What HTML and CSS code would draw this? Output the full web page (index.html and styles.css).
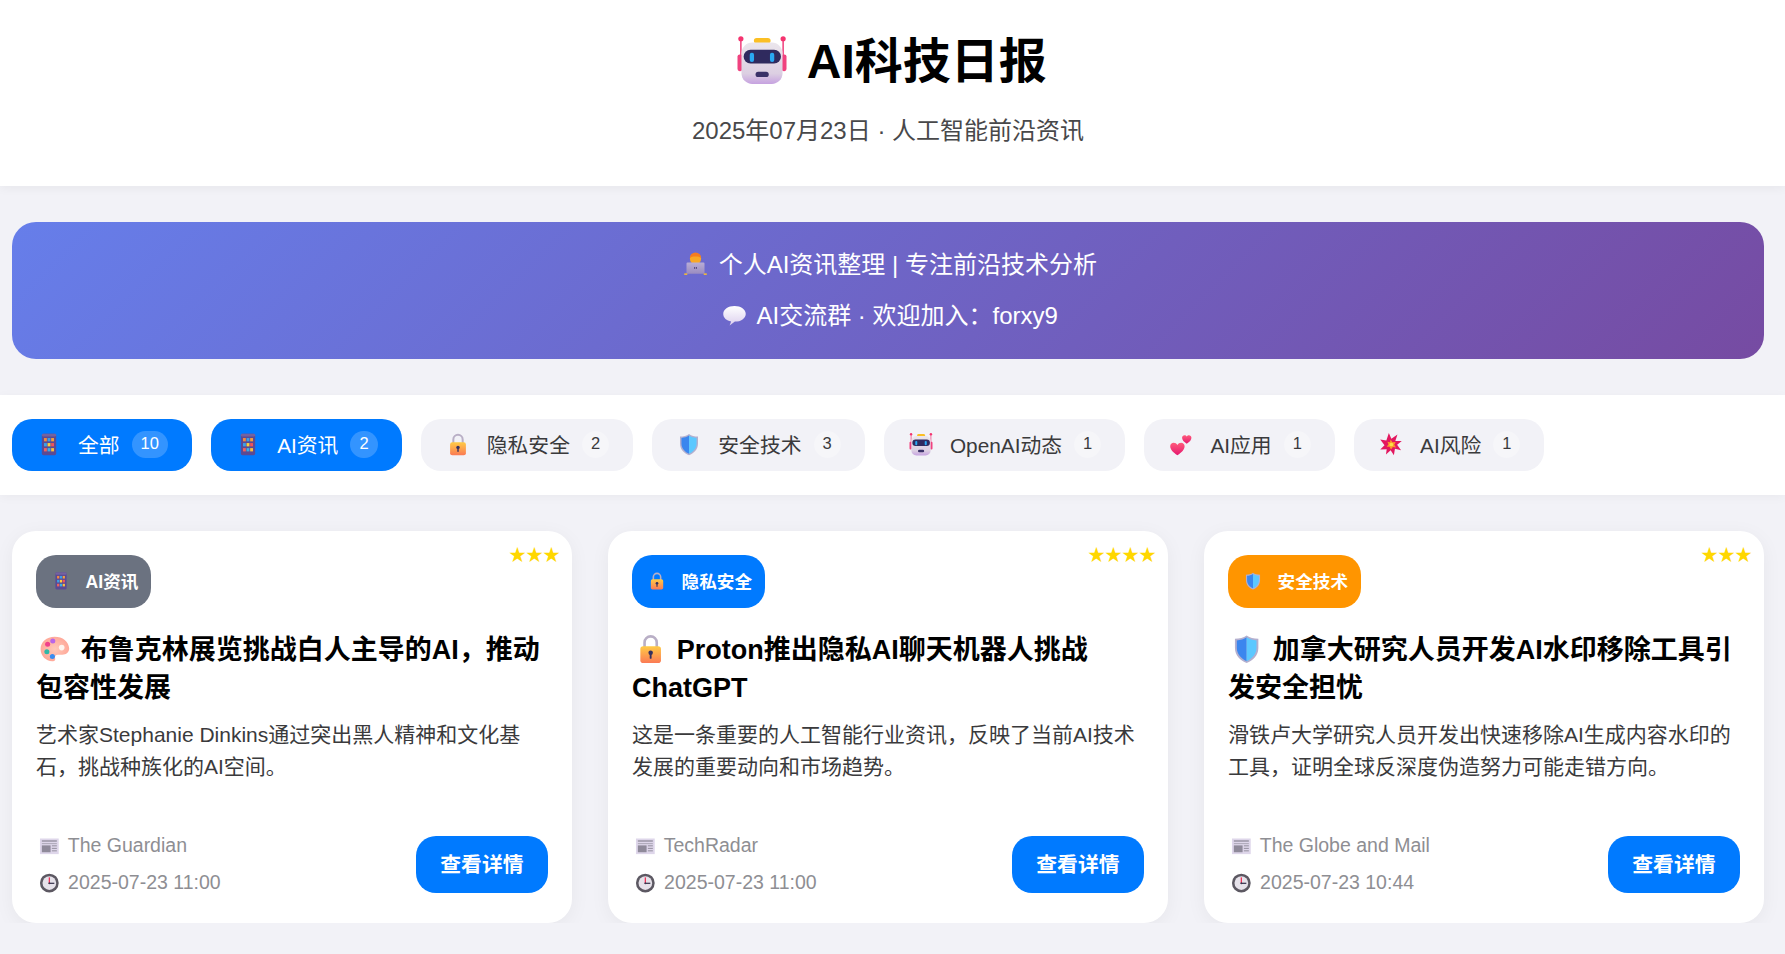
FILE: index.html
```html
<!DOCTYPE html>
<html lang="zh-CN">
<head>
    <meta charset="UTF-8">
    <meta name="viewport" content="width=device-width, initial-scale=1.0">
    <title>AI科技日报</title>
    <link rel="stylesheet" href="styles.css">
</head>
<body>

<svg class="sprite" xmlns="http://www.w3.org/2000/svg">
    <defs>
        <linearGradient id="gHead" x1="0" y1="0" x2="0" y2="1"><stop offset="0" stop-color="#ebe6ec"/><stop offset="0.75" stop-color="#dccfe2"/><stop offset="1" stop-color="#c6a2e0"/></linearGradient>
        <linearGradient id="gLock" x1="0" y1="0" x2="0" y2="1"><stop offset="0" stop-color="#ffcb45"/><stop offset="1" stop-color="#fb7a55"/></linearGradient>
        <linearGradient id="gHeart" x1="0" y1="0" x2="0" y2="1"><stop offset="0" stop-color="#ff5c7c"/><stop offset="1" stop-color="#e5176f"/></linearGradient>
        <linearGradient id="gBubble" x1="0" y1="0" x2="0" y2="1"><stop offset="0" stop-color="#ffffff"/><stop offset="1" stop-color="#dcd0ee"/></linearGradient>
        <linearGradient id="gLaptop" x1="0" y1="0" x2="0" y2="1"><stop offset="0" stop-color="#b9aed6"/><stop offset="1" stop-color="#9a8cc0"/></linearGradient>
        <radialGradient id="gPalette"><stop offset="0" stop-color="#ffc9b8"/><stop offset="1" stop-color="#ffa99a"/></radialGradient>
    </defs>
    <symbol id="i-robot" viewBox="0 0 32 32">
        <rect x="0" y="12" width="3.2" height="11" rx="1.4" fill="#f0427f"/>
        <rect x="28.8" y="12" width="3.2" height="11" rx="1.4" fill="#f0427f"/>
        <rect x="1.7" y="2" width="1" height="11" fill="#f0427f"/>
        <rect x="29.3" y="2" width="1" height="11" fill="#f0427f"/>
        <circle cx="2.2" cy="1.8" r="1.7" fill="#f5336f"/>
        <circle cx="29.8" cy="1.8" r="1.7" fill="#f5336f"/>
        <rect x="10.7" y="1.3" width="10.9" height="3.6" rx="1.8" fill="#fbbf24"/>
        <rect x="2.6" y="4.3" width="26.8" height="27" rx="7" fill="url(#gHead)"/>
        <rect x="4" y="9" width="24.4" height="9" rx="4.5" fill="#2f2a5e"/>
        <rect x="8" y="11" width="2.8" height="6" rx="1.3" fill="#2aa8f2"/>
        <rect x="21.2" y="11" width="2.8" height="6" rx="1.3" fill="#2aa8f2"/>
        <rect x="11.8" y="23.4" width="8.6" height="3.4" rx="1.7" fill="#3a3168"/>
    </symbol>
    <symbol id="i-abacus" viewBox="0 0 32 32">
        <rect x="6" y="1" width="20" height="30" rx="2.4" fill="#5a4a94"/>
        <rect x="6" y="1" width="20" height="4" rx="2" fill="#74629f"/>
        <rect x="9" y="7" width="4" height="4.6" fill="#f48a3c"/><rect x="14" y="7" width="4" height="4.6" fill="#3aa0e8"/><rect x="19" y="7" width="4" height="4.6" fill="#f4a03c"/>
        <rect x="9" y="14" width="4" height="4.6" fill="#3aa0e8"/><rect x="14" y="14" width="4" height="4.6" fill="#fbd03c"/><rect x="19" y="14" width="4" height="4.6" fill="#f0545c"/>
        <rect x="9" y="21" width="4" height="4.6" fill="#f0645c"/><rect x="14" y="21" width="4" height="4.6" fill="#3ab0e8"/><rect x="19" y="21" width="4" height="4.6" fill="#fbc03c"/>
    </symbol>
    <symbol id="i-lock" viewBox="0 0 32 32">
        <path d="M9.500 14V9a6.500 6.500 0 0 1 13 0v5" fill="none" stroke="#b9afc6" stroke-width="2.800"/>
        <rect x="5" y="13" width="22" height="18" rx="3" fill="url(#gLock)"/>
        <circle cx="16" cy="20" r="2.400" fill="#35305f"/>
        <rect x="15" y="20" width="2" height="6.500" rx="1" fill="#35305f"/>
    </symbol>
    <symbol id="i-shield" viewBox="0 0 32 32">
        <path d="M16 1.500C12.500 4 8.500 5 3.500 5v10c0 8 6 13.500 12.500 16 6.500-2.500 12.500-8 12.500-16V5c-5 0-9-1-12.500-3.500z" fill="#b3afcf"/>
        <path d="M16 3.500C13 5.500 9.500 6.500 5.500 6.800V15c0 6.500 5 11.500 10.500 14z" fill="#3b86ee"/>
        <path d="M16 3.500c3 2 6.500 3 10.500 3.300V15c0 6.500-5 11.500-10.500 14z" fill="#5cc8ff"/>
    </symbol>
    <symbol id="i-hearts" viewBox="0 0 32 32">
        <path d="M11 31C5 27 1 23 1 18.500 1 15.500 3.200 13.500 5.800 13.500c2.200 0 4 1.200 5.200 3.200 1.200-2 3-3.200 5.200-3.200 2.600 0 4.800 2 4.800 5 0 4.500-4 8.500-10 12.500z" fill="url(#gHeart)"/>
        <path d="M24 15c-4-2.600-6.500-5.400-6.500-8.400 0-2.200 1.600-3.600 3.400-3.600 1.300 0 2.400.7 3.100 2 .7-1.300 1.800-2 3.100-2 1.800 0 3.400 1.400 3.400 3.600 0 3-2.500 5.800-6.500 8.400z" fill="url(#gHeart)"/>
    </symbol>
    <symbol id="i-burst" viewBox="0 0 32 32">
        <polygon points="13,0 16.500,8 25,2 22,11 31,11 24.500,16.500 30,24 21.500,22 20,31 15.500,24 9,30 10,22.500 1,23 7,17 1,9 9.500,10.500" fill="#e3175f"/>
        <polygon points="15.500,9 18,13 22.500,12.500 20.500,16.500 23,20 18.500,19.500 16,23 14,19 10,19 12.500,15.500 11,12 14.500,13" fill="#fb9a2a"/>
        <circle cx="16.500" cy="16" r="2.600" fill="#fde047"/>
    </symbol>
    <symbol id="i-palette" viewBox="0 0 32 32">
        <path d="M16 3C7.500 3 1 8.800 1 16s5.500 13 12.500 13c3 0 3.500-1.600 3-3.200-.6-1.900.4-3.800 3-3.800h4.500c4.500 0 7.500-2.600 7.500-6.500C31 8 24.500 3 16 3z" fill="url(#gPalette)"/>
        <circle cx="23.500" cy="14.500" r="3" fill="#fff4ee"/>
        <circle cx="8.500" cy="11" r="2.700" fill="#f0418c"/>
        <circle cx="14" cy="7.500" r="2.700" fill="#b866e8"/>
        <circle cx="7.700" cy="19" r="2.700" fill="#2fb8a8"/>
        <circle cx="13.600" cy="24" r="2.700" fill="#3a8cf0"/>
    </symbol>
    <symbol id="i-news" viewBox="0 0 32 32">
        <rect x="1" y="4" width="30" height="25" fill="#ded6ea"/>
        <rect x="4" y="7" width="24" height="2" fill="#8f8a9a"/>
        <rect x="4" y="11.500" width="24" height="1.500" fill="#a9a4b4"/>
        <rect x="4" y="15" width="14" height="11" fill="#8f8a9a"/>
        <rect x="20" y="15" width="8" height="1.500" fill="#8f8a9a"/>
        <rect x="20" y="19" width="8" height="1.500" fill="#8f8a9a"/>
        <rect x="20" y="23" width="8" height="1.500" fill="#8f8a9a"/>
    </symbol>
    <symbol id="i-clock" viewBox="0 0 32 32">
        <circle cx="16" cy="16" r="15" fill="#5c5862"/>
        <circle cx="16" cy="16" r="11" fill="#e6e2ea"/>
        <rect x="15" y="7" width="2" height="10" fill="#ef2f55"/>
        <rect x="15" y="15.500" width="9" height="2" fill="#3a3650"/>
        <circle cx="16" cy="16.500" r="1.500" fill="#3a3650"/>
    </symbol>
    <symbol id="i-tech" viewBox="0 0 32 32">
        <circle cx="16" cy="9" r="7.500" fill="#f9a825"/>
        <path d="M8.500 8a7.500 7.500 0 0 1 15 0c-2-1.500-4-2-7.500-2s-5.500.5-7.500 2z" fill="#f57c1f"/>
        <rect x="4" y="14" width="24" height="15" rx="1.500" fill="url(#gLaptop)"/>
        <rect x="14" y="20" width="1.500" height="2.500" fill="#5a4f80"/><rect x="16.500" y="20" width="1.500" height="2.500" fill="#5a4f80"/>
        <rect x="1" y="28.500" width="4" height="2" fill="#fbc02d"/><rect x="27" y="28.500" width="4" height="2" fill="#fbc02d"/>
    </symbol>
    <symbol id="i-bubble" viewBox="0 0 32 32">
        <path d="M16 4C7.500 4 1 8.500 1 14.500c0 5 4.500 9 10.500 10l-2 5.500 7-5.200c8 0 14.500-4.500 14.500-10.300C31 8.500 24.500 4 16 4z" fill="url(#gBubble)"/>
    </symbol>
</svg>

<div class="header">
    <h1><svg class="emoji emoji-h1"><use href="#i-robot"/></svg> AI科技日报</h1>
    <p class="subtitle">2025年07月23日 · 人工智能前沿资讯</p>
</div>

<div class="banner">
    <p><svg class="emoji emoji-banner"><use href="#i-tech"/></svg> 个人AI资讯整理 | 专注前沿技术分析</p>
    <p class="banner-second"><svg class="emoji emoji-banner"><use href="#i-bubble"/></svg> AI交流群 · 欢迎加入：forxy9</p>
</div>

<div class="tabs">
    <a class="tab active" href="#"><svg class="emoji emoji-tab"><use href="#i-abacus"/></svg><span>全部</span><span class="count">10</span></a>
    <a class="tab active" href="#"><svg class="emoji emoji-tab"><use href="#i-abacus"/></svg><span>AI资讯</span><span class="count">2</span></a>
    <a class="tab" href="#"><svg class="emoji emoji-tab"><use href="#i-lock"/></svg><span>隐私安全</span><span class="count">2</span></a>
    <a class="tab" href="#"><svg class="emoji emoji-tab"><use href="#i-shield"/></svg><span>安全技术</span><span class="count">3</span></a>
    <a class="tab" href="#"><svg class="emoji emoji-tab"><use href="#i-robot"/></svg><span>OpenAI动态</span><span class="count">1</span></a>
    <a class="tab" href="#"><svg class="emoji emoji-tab"><use href="#i-hearts"/></svg><span>AI应用</span><span class="count">1</span></a>
    <a class="tab" href="#"><svg class="emoji emoji-tab"><use href="#i-burst"/></svg><span>AI风险</span><span class="count">1</span></a>
</div>

<div class="cards">
    <div class="card">
        <div class="stars">★★★</div>
        <div class="tag tag-gray"><svg class="emoji emoji-tag"><use href="#i-abacus"/></svg>AI资讯</div>
        <h3><svg class="emoji emoji-title"><use href="#i-palette"/></svg> 布鲁克林展览挑战白人主导的AI，推动包容性发展</h3>
        <p class="desc">艺术家Stephanie Dinkins通过突出黑人精神和文化基石，挑战种族化的AI空间。</p>
        <div class="card-footer">
            <div class="meta">
                <div><svg class="emoji emoji-meta"><use href="#i-news"/></svg> The Guardian</div>
                <div><svg class="emoji emoji-meta"><use href="#i-clock"/></svg> 2025-07-23 11:00</div>
            </div>
            <a class="details" href="#">查看详情</a>
        </div>
    </div>
    <div class="card">
        <div class="stars">★★★★</div>
        <div class="tag tag-blue"><svg class="emoji emoji-tag"><use href="#i-lock"/></svg>隐私安全</div>
        <h3><svg class="emoji emoji-title"><use href="#i-lock"/></svg> Proton推出隐私AI聊天机器人挑战ChatGPT</h3>
        <p class="desc">这是一条重要的人工智能行业资讯，反映了当前AI技术发展的重要动向和市场趋势。</p>
        <div class="card-footer">
            <div class="meta">
                <div><svg class="emoji emoji-meta"><use href="#i-news"/></svg> TechRadar</div>
                <div><svg class="emoji emoji-meta"><use href="#i-clock"/></svg> 2025-07-23 11:00</div>
            </div>
            <a class="details" href="#">查看详情</a>
        </div>
    </div>
    <div class="card">
        <div class="stars">★★★</div>
        <div class="tag tag-orange"><svg class="emoji emoji-tag"><use href="#i-shield"/></svg>安全技术</div>
        <h3><svg class="emoji emoji-title"><use href="#i-shield"/></svg> 加拿大研究人员开发AI水印移除工具引发安全担忧</h3>
        <p class="desc">滑铁卢大学研究人员开发出快速移除AI生成内容水印的工具，证明全球反深度伪造努力可能走错方向。</p>
        <div class="card-footer">
            <div class="meta">
                <div><svg class="emoji emoji-meta"><use href="#i-news"/></svg> The Globe and Mail</div>
                <div><svg class="emoji emoji-meta"><use href="#i-clock"/></svg> 2025-07-23 10:44</div>
            </div>
            <a class="details" href="#">查看详情</a>
        </div>
    </div>
</div>

</body>
</html>
```

FILE: styles.css
```css
body {
    font-family: "Liberation Sans", "Noto Sans CJK SC", sans-serif;
    background-color: #f2f2f7;
    color: #1d1d1f;
    margin: 0;
    padding: 0;
}
.sprite {
    display: block;
    width: 0;
    height: 0;
}
.emoji {
    display: inline-block;
}
.emoji-h1 {
    width: 66px;
    height: 49px;
    vertical-align: -7px;
}
.emoji-banner {
    width: 33px;
    height: 24px;
    vertical-align: -3px;
}
.emoji-tab {
    width: 26px;
    height: 23px;
    margin-right: 16px;
    flex-shrink: 0;
}
.emoji-tag {
    width: 24px;
    height: 18px;
    margin-right: 12.8px;
    flex-shrink: 0;
}
.emoji-title {
    width: 37.3px;
    height: 30px;
    vertical-align: -5px;
}
.emoji-meta {
    width: 26.7px;
    height: 20px;
    vertical-align: -4px;
}
.header {
    background-color: #fff;
    text-align: center;
    padding: 33px 9px 37px 0;
    box-shadow: 0 2px 10px rgba(0,0,0,0.05);
}
.header h1 {
    font-size: 48px;
    line-height: 1.2;
    font-weight: 700;
    color: #000;
    margin: 0 0 22px;
}
.subtitle {
    font-size: 24px;
    line-height: 1.5;
    color: #48484a;
    margin: 0;
}
.banner {
    margin: 36px 21px 36px 12px;
    padding: 24px;
    border-radius: 24px;
    background: linear-gradient(135deg, #667eea 0%, #764ba2 100%);
    color: #fff;
    text-align: center;
    font-size: 24px;
    line-height: 1.6;
}
.banner p {
    margin: 0;
}
.banner .banner-second {
    margin-top: 12.8px;
}
.tabs {
    background-color: #fff;
    display: flex;
    gap: 19.2px;
    padding: 24px 21px 24px 12px;
    box-shadow: 0 2px 10px rgba(0,0,0,0.04);
}
.tab {
    display: flex;
    align-items: center;
    height: 52px;
    box-sizing: border-box;
    padding: 0 24px 2px;
    border-radius: 20px;
    background-color: #f2f2f7;
    color: #3a3a3c;
    font-size: 20.8px;
    text-decoration: none;
}
.tab.active {
    background-color: #007aff;
    color: #fff;
}
.count {
    margin-left: 12px;
    padding: 0 9px;
    height: 27px;
    line-height: 25px;
    border-radius: 14px;
    font-size: 16.5px;
    background-color: rgba(255,255,255,0.3);
}
.active .count {
    background-color: rgba(255,255,255,0.2);
}
.cards {
    display: grid;
    grid-template-columns: repeat(3, 1fr);
    gap: 36px;
    padding: 36px 21px 0 12px;
}
.card {
    background-color: #fff;
    border-radius: 24px;
    padding: 24px 24px 26px;
    position: relative;
    display: flex;
    flex-direction: column;
    box-shadow: 0 4px 20px rgba(0,0,0,0.05);
}
.stars {
    position: absolute;
    top: 15px;
    right: 12px;
    font-size: 17px;
    line-height: 1.2;
    color: #ffd700;
}
.tag {
    display: flex;
    align-items: center;
    align-self: flex-start;
    height: 53px;
    box-sizing: border-box;
    padding: 0 12.8px 2px;
    border-radius: 20px;
    font-size: 17.6px;
    font-weight: 700;
    color: #fff;
}
.tag-gray { background-color: #6b7280; }
.tag-blue { background-color: #007aff; }
.tag-orange { background-color: #ff9500; }
.card h3 {
    font-size: 27px;
    line-height: 37.5px;
    font-weight: 700;
    color: #000;
    margin: 24px 0 12px;
}
.desc {
    font-size: 21px;
    line-height: 32px;
    color: #3a3a3c;
    margin: 0 0 46.8px;
}
.card-footer {
    display: flex;
    justify-content: space-between;
    align-items: center;
}
.meta {
    font-size: 19.5px;
    line-height: 30.7px;
    color: #8e8e93;
}
.meta div + div {
    margin-top: 6px;
}
.details {
    background-color: #007aff;
    color: #fff;
    font-size: 20.8px;
    font-weight: 700;
    text-decoration: none;
    padding: 16px 24.5px;
    line-height: 25px;
    margin-top: 2px;
    border-radius: 20px;
}
```
